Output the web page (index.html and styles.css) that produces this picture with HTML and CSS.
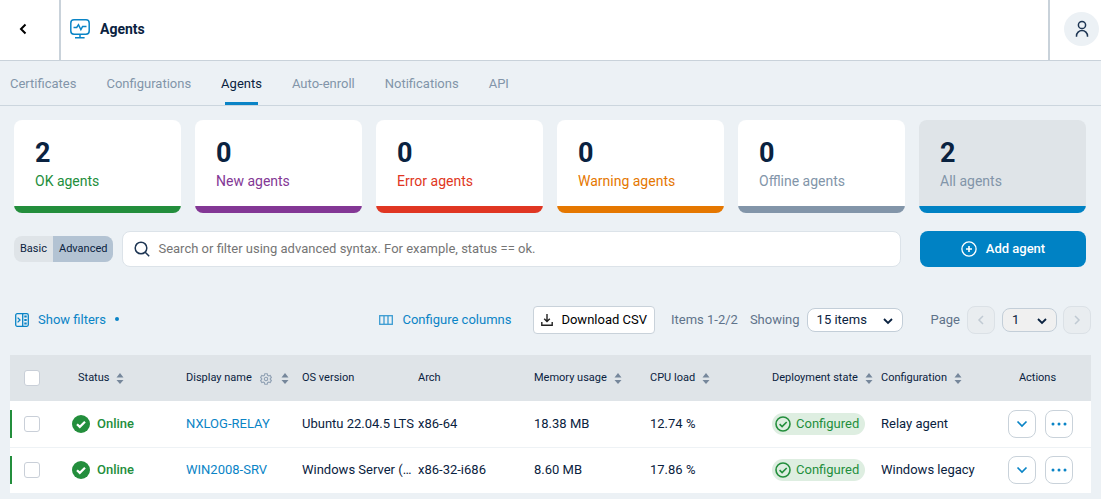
FILE: index.html
```
<!DOCTYPE html>
<html lang="en">
<head>
	<meta charset="utf-8">
	<title>Agents</title>
	<link rel="stylesheet" href="styles.css">
</head>
<body>
	<svg class="sprite" width="0" height="0" aria-hidden="true">
		<symbol id="sort" viewBox="0 0 8 13">
			<path d="M4 1l3.5 4.5h-7zM4 12L.5 8h7z" fill="#76879b"/>
		</symbol>
		<symbol id="check" viewBox="0 0 18 18">
			<circle cx="9" cy="9" r="9" fill="#238e3c"/>
			<path d="M5 9.2l2.8 2.7L13 6.8" fill="none" stroke="#fff" stroke-width="2.2"/>
		</symbol>
		<symbol id="check_ring" viewBox="0 0 16 16">
			<circle cx="8" cy="8" r="7" fill="none" stroke="#238e3c" stroke-width="1.6"/>
			<path d="M4.6 8.2l2.5 2.4 4.6-4.6" fill="none" stroke="#238e3c" stroke-width="1.6"/>
		</symbol>
		<symbol id="down" viewBox="0 0 12 8">
			<path d="M1.500 1.500L6 6l4.500-4.500" fill="none" stroke="currentColor" stroke-width="1.700"/>
		</symbol>
		<symbol id="pick_down" viewBox="0 0 12 8">
			<path d="M2 2l4 4 4-4" fill="none" stroke="currentColor" stroke-width="1.800"/>
		</symbol>
		<symbol id="dots" viewBox="0 0 16 4">
			<g fill="currentColor"><circle cx="2" cy="2" r="1.5"/><circle cx="8" cy="2" r="1.5"/><circle cx="14" cy="2" r="1.5"/></g>
		</symbol>
	</svg>

	<header class="top">
		<button class="back" type="button" aria-label="Back">
			<svg width="8" height="12" viewBox="0 0 8 12"><path d="M6.5 1.5L2 6l4.5 4.5" fill="none" stroke="#000" stroke-width="2"/></svg>
		</button>
		<div class="title">
			<svg width="20" height="20" viewBox="0 0 20 20" fill="none" stroke="#0a84c6" stroke-width="1.5">
				<rect x=".8" y=".8" width="18.4" height="14.4" rx="3.2"/>
				<path d="M3.5 8.5h3.2l1.800-2.800 2.400 5 1.700-3.200h3.900M10 15.500v3M5 18.700h9.600"/>
			</svg>
			<h1>Agents</h1>
		</div>
		<div class="user">
			<button class="avatar" type="button" aria-label="Account">
				<svg width="14" height="18" viewBox="0 0 14 18" fill="none" stroke="#1d3553" stroke-width="1.5">
					<circle cx="7" cy="5" r="3.6"/>
					<path d="M1.5 16.8v-.8a5.4 5.4 0 0 1 11 0v.8"/>
				</svg>
			</button>
		</div>
	</header>

	<nav class="tabs">
		<a href="#">Certificates</a>
		<a href="#">Configurations</a>
		<a href="#" class="active">Agents</a>
		<a href="#">Auto-enroll</a>
		<a href="#">Notifications</a>
		<a href="#">API</a>
	</nav>

	<main>
		<section class="cards">
			<div class="card ok"><b>2</b><span>OK agents</span></div>
			<div class="card new"><b>0</b><span>New agents</span></div>
			<div class="card error"><b>0</b><span>Error agents</span></div>
			<div class="card warning"><b>0</b><span>Warning agents</span></div>
			<div class="card offline"><b>0</b><span>Offline agents</span></div>
			<div class="card all"><b>2</b><span>All agents</span></div>
		</section>

		<div class="search_row">
			<div class="mode">
				<button type="button">Basic</button>
				<button type="button" class="on">Advanced</button>
			</div>
			<label class="search">
				<svg width="16" height="16" viewBox="0 0 16 16" fill="none" stroke="#1d3553" stroke-width="1.5"><circle cx="7" cy="7" r="5.8"/><path d="M11.2 11.2l4 4"/></svg>
				<input type="text" aria-label="Search agents" placeholder="Search or filter using advanced syntax. For example, status == ok.">
			</label>
			<button type="button" class="add">
				<svg width="16" height="16" viewBox="0 0 16 16" fill="none" stroke="#fff" stroke-width="1.3"><circle cx="8" cy="8" r="7.1"/><path d="M8 5v6M5 8h6" stroke-width="1.6"/></svg>
				Add agent
			</button>
		</div>

		<div class="toolbar">
			<button type="button" class="plain filters">
				<svg width="14" height="14" viewBox="0 0 14 14" fill="none" stroke="#0a84c6" stroke-width="1.3">
					<rect x=".7" y=".7" width="12.6" height="12.6" rx="1.5"/>
					<path d="M7.7 1v12M2.6 4.6L5 7 2.6 9.4"/>
					<path d="M9.3 3.5h2.4M9.3 7h2.4M9.3 10.5h2.4" stroke-width="1.8"/>
				</svg>
				Show filters
				<i class="dot"></i>
			</button>
			<button type="button" class="plain columns">
				<svg width="14" height="10" viewBox="0 0 14 10" fill="none" stroke="#3a9bd2" stroke-width="1.3"><rect x=".7" y=".7" width="12.6" height="8.6"/><path d="M5 1v8M9 1v8"/></svg>
				Configure columns
			</button>
			<button type="button" class="download">
				<svg width="12" height="12" viewBox="0 0 12 12" fill="none" stroke="#222" stroke-width="1.4"><path d="M6 0v7.5M3.2 4.8L6 7.6l2.8-2.8M.8 8v3.2h10.4V8"/></svg>
				Download CSV
			</button>
			<span class="count">Items 1-2/2</span>
			<label for="per_page">Showing</label>
			<div class="pick per_page">
				<select id="per_page"><option>15 items</option><option>50 items</option></select>
				<svg width="12" height="8"><use href="#pick_down"/></svg>
			</div>
			<label for="page" class="page_label">Page</label>
			<button type="button" class="step" aria-label="Previous page" disabled>
				<svg width="8" height="10" viewBox="0 0 8 10"><path d="M6 1L2 5l4 4" fill="none" stroke="#c0cad3" stroke-width="1.5"/></svg>
			</button>
			<div class="pick page">
				<select id="page"><option>1</option></select>
				<svg width="12" height="8"><use href="#pick_down"/></svg>
			</div>
			<button type="button" class="step" aria-label="Next page" disabled>
				<svg width="8" height="10" viewBox="0 0 8 10"><path d="M2 1l4 4-4 4" fill="none" stroke="#c0cad3" stroke-width="1.5"/></svg>
			</button>
		</div>

		<table class="agents">
			<colgroup>
				<col class="c_check"><col class="c_status"><col class="c_text"><col class="c_text"><col class="c_text"><col class="c_text"><col class="c_cpu"><col class="c_state"><col class="c_config"><col class="c_actions">
			</colgroup>
			<thead>
				<tr>
					<th><input type="checkbox" aria-label="Select all"></th>
					<th class="status_head">Status <svg class="sort" width="8" height="13"><use href="#sort"/></svg></th>
					<th>Display name
						<svg class="gear" width="12" height="12" viewBox="0 0 12 12" fill="none" stroke="#8fa0b3" stroke-width="1.1">
							<path d="M4.8.7h2.4l.4 1.600 1 .6 1.600-.5 1.200 2.100L10.300 5.600v.8l1.100 1.100-1.200 2.100-1.600-.5-1 .6-.4 1.600H4.800l-.4-1.600-1-.6-1.600.5L.6 7.500l1.100-1.100v-.8L.6 4.500l1.200-2.100 1.600.5 1-.6z"/>
							<circle cx="6" cy="6" r="1.700"/>
						</svg>
						<svg class="sort" width="8" height="13"><use href="#sort"/></svg></th>
					<th>OS version</th>
					<th>Arch</th>
					<th>Memory usage <svg class="sort" width="8" height="13"><use href="#sort"/></svg></th>
					<th>CPU load <svg class="sort" width="8" height="13"><use href="#sort"/></svg></th>
					<th>Deployment state <svg class="sort" width="8" height="13"><use href="#sort"/></svg></th>
					<th>Configuration <svg class="sort" width="8" height="13"><use href="#sort"/></svg></th>
					<th class="actions_head">Actions</th>
				</tr>
			</thead>
			<tbody>
				<tr>
					<td><input type="checkbox" aria-label="Select NXLOG-RELAY"></td>
					<td><div class="online"><svg width="18" height="18"><use href="#check"/></svg>Online</div></td>
					<td><a href="#">NXLOG-RELAY</a></td>
					<td>Ubuntu 22.04.5 LTS</td>
					<td>x86-64</td>
					<td>18.38 MB</td>
					<td>12.74 %</td>
					<td><span class="state"><svg width="16" height="16"><use href="#check_ring"/></svg>Configured</span></td>
					<td>Relay agent</td>
					<td>
						<div class="actions">
							<button type="button" aria-label="Expand"><svg width="12" height="8"><use href="#down"/></svg></button>
							<button type="button" aria-label="More"><svg width="16" height="4"><use href="#dots"/></svg></button>
						</div>
					</td>
				</tr>
				<tr>
					<td><input type="checkbox" aria-label="Select WIN2008-SRV"></td>
					<td><div class="online"><svg width="18" height="18"><use href="#check"/></svg>Online</div></td>
					<td><a href="#">WIN2008-SRV</a></td>
					<td>Windows Server (…</td>
					<td>x86-32-i686</td>
					<td>8.60 MB</td>
					<td>17.86 %</td>
					<td><span class="state"><svg width="16" height="16"><use href="#check_ring"/></svg>Configured</span></td>
					<td>Windows legacy</td>
					<td>
						<div class="actions">
							<button type="button" aria-label="Expand"><svg width="12" height="8"><use href="#down"/></svg></button>
							<button type="button" aria-label="More"><svg width="16" height="4"><use href="#dots"/></svg></button>
						</div>
					</td>
				</tr>
			</tbody>
		</table>
	</main>
</body>
</html>
```
FILE: styles.css
```
*
{
	box-sizing: border-box;
}
body
{
	margin: 0;
	background-color: #ecf1f5;
	color: #0a2240;
	font-family: Roboto, "Liberation Sans", sans-serif;
	font-size: 13px;
	line-height: 16px;
}
button, input, select
{
	font: inherit;
	color: inherit;
}
button
{
	padding: 0;
	border: none;
	background: none;
	display: flex;
	align-items: center;
	justify-content: center;
}
svg
{
	flex: none;
}
a
{
	color: #0a84c6;
	text-decoration: none;
}
.sprite
{
	position: absolute;
}

/* header */
.top
{
	display: flex;
	height: 61px;
	background-color: white;
	border-bottom: 1px solid #c9d2da;
}
.back
{
	width: 61px;
	padding: 0 14px 2px 0;
	border-right: 2px solid #c9d2da;
}
.title
{
	flex: 1;
	display: flex;
	align-items: center;
	gap: 10px;
	padding: 0 0 2px 9px;
}
.title h1
{
	margin: 0;
	font-size: 14px;
	font-weight: 700;
}
.user
{
	display: flex;
	align-items: center;
	padding: 0 2px 2px 14px;
	border-left: 2px solid #c9d2da;
}
.avatar
{
	width: 35px;
	height: 34px;
	border-radius: 50%;
	background-color: #ecf1f5;
}

/* tabs */
.tabs
{
	display: flex;
	gap: 30px;
	padding: 0 10px;
	height: 45px;
	border-bottom: 1px solid #ccd6de;
}
.tabs a
{
	padding-top: 15px;
	color: #8295a9;
}
.tabs .active
{
	color: #0a2240;
	background: linear-gradient(#0a84c6, #0a84c6) no-repeat center bottom / 33px 3px;
}
main
{
	padding: 14px 10px 0;
}

/* counters */
.cards
{
	display: grid;
	grid-template-columns: repeat(6, 1fr);
	gap: 14px;
	padding: 0 5px 0 4px;
}
.card
{
	--bar: #238e3c;
	display: flex;
	flex-direction: column;
	padding: 17px 21px 24px;
	border-radius: 8px;
	background: linear-gradient(var(--bar), var(--bar)) no-repeat bottom / 100% 7px white;
	color: var(--bar);
	font-size: 14px;
}
.card b
{
	color: #0a2240;
	font-size: 27px;
	line-height: 32px;
	padding-bottom: 4px;
}
.new { --bar: #833795; }
.error { --bar: #e03622; }
.warning { --bar: #e57700; }
.offline { --bar: #8295a9; }
.all
{
	--bar: #0082c4;
	background-color: #dfe4e8;
	color: #8295a9;
}

/* search */
.search_row
{
	display: flex;
	align-items: center;
	padding: 0 5px 0 4px;
	margin-top: 18px;
}
.mode
{
	display: flex;
	border-radius: 8px;
	overflow: hidden;
	font-size: 11px;
	background-color: #dfe4e8;
}
.mode button
{
	height: 26px;
	padding: 0 6px;
}
.mode .on
{
	background-color: #b3c3d3;
}
.search
{
	flex: 1;
	display: flex;
	align-items: center;
	gap: 8px;
	height: 36px;
	margin: 0 19px 0 9px;
	padding: 0 11px;
	border: 1px solid #dce3e9;
	border-radius: 8px;
	background-color: white;
}
.search input
{
	flex: 1;
	min-width: 0;
	padding: 0;
	border: none;
	outline: none;
}
.search input::placeholder
{
	color: #757575;
}
.add
{
	width: 166px;
	height: 36px;
	gap: 9px;
	border-radius: 8px;
	background-color: #0082c4;
	color: white;
	font-weight: 500;
}

/* toolbar */
.toolbar
{
	display: flex;
	align-items: center;
	margin-top: 39px;
	color: #5f738a;
}
.plain
{
	gap: 9px;
	color: #0a84c6;
}
.filters
{
	padding-left: 5px;
}
.dot
{
	width: 4px;
	height: 4px;
	margin-bottom: 3px;
	border-radius: 50%;
	background-color: #0a84c6;
}
.columns
{
	margin: 0 22px 0 auto;
}
.download
{
	height: 28px;
	gap: 8px;
	padding: 0 7px;
	border: 1px solid #c9d2da;
	border-radius: 4px;
	background-color: white;
	color: #000;
}
.count
{
	margin: 0 12px 0 16px;
}
.pick
{
	position: relative;
	margin-left: 7px;
	color: #0a2240;
}
.pick select
{
	appearance: none;
	width: 100%;
	height: 24px;
	padding: 0 9px;
	border: 1px solid #c3ced8;
	border-radius: 8px;
	background-color: white;
}
.pick svg
{
	position: absolute;
	right: 9px;
	top: 9px;
	pointer-events: none;
}
.per_page
{
	width: 96px;
}
.page
{
	width: 55px;
	margin-right: 6px;
}
.page select
{
	background-color: #f0f0f0;
}
.page_label
{
	margin: 0 7px 0 28px;
}
.step
{
	width: 28px;
	height: 28px;
	border: 1px solid #dbe1e6;
	border-radius: 8px;
	background-color: #e9edf0;
}

/* table */
.agents
{
	width: 100%;
	margin-top: 21px;
	table-layout: fixed;
	border-collapse: collapse;
	background-color: white;
}
.c_check { width: 52px; }
.c_status { width: 124px; }
.c_text { width: 116px; }
.c_cpu { width: 122px; }
.c_state { width: 109px; }
.c_config { width: 111px; }
.c_actions { width: 99px; }
.agents th, .agents td
{
	height: 46px;
	padding: 0;
	text-align: left;
	white-space: nowrap;
}
.agents th
{
	background-color: #dfe4e8;
	font-size: 11px;
	font-weight: 400;
}
.agents td
{
	padding-right: 2px;
	overflow: hidden;
	text-overflow: ellipsis;
}
.agents tbody tr + tr td
{
	border-top: 1px solid #eef2f5;
}
.agents tbody td:first-child
{
	background: linear-gradient(#238e3c, #238e3c) no-repeat 0 center / 2px 28px;
}
.agents input
{
	appearance: none;
	display: block;
	width: 16px;
	height: 16px;
	margin: 0 0 0 14px;
	border: 1px solid #c9cfd8;
	border-radius: 3px;
	background-color: white;
}
.agents .status_head
{
	padding-left: 16px;
}
.agents .actions_head
{
	padding-right: 8px;
	text-align: center;
}
.sort
{
	margin-left: 4px;
	vertical-align: -4px;
}
.gear
{
	margin: 0 3px 0 5px;
	vertical-align: -4px;
}
.online
{
	display: flex;
	align-items: center;
	gap: 7px;
	padding-left: 10px;
	color: #238e3c;
	font-weight: 500;
}
.state
{
	display: inline-flex;
	align-items: center;
	gap: 5px;
	height: 22px;
	padding: 0 6px 0 3px;
	border-radius: 11px;
	background-color: #deeee1;
	color: #238e3c;
	vertical-align: middle;
}
.actions
{
	display: flex;
	gap: 9px;
	padding-left: 16px;
	color: #0a84c6;
}
.actions button
{
	width: 28px;
	height: 28px;
	border: 1px solid #c9d2da;
	border-radius: 8px;
	background-color: white;
}
```
